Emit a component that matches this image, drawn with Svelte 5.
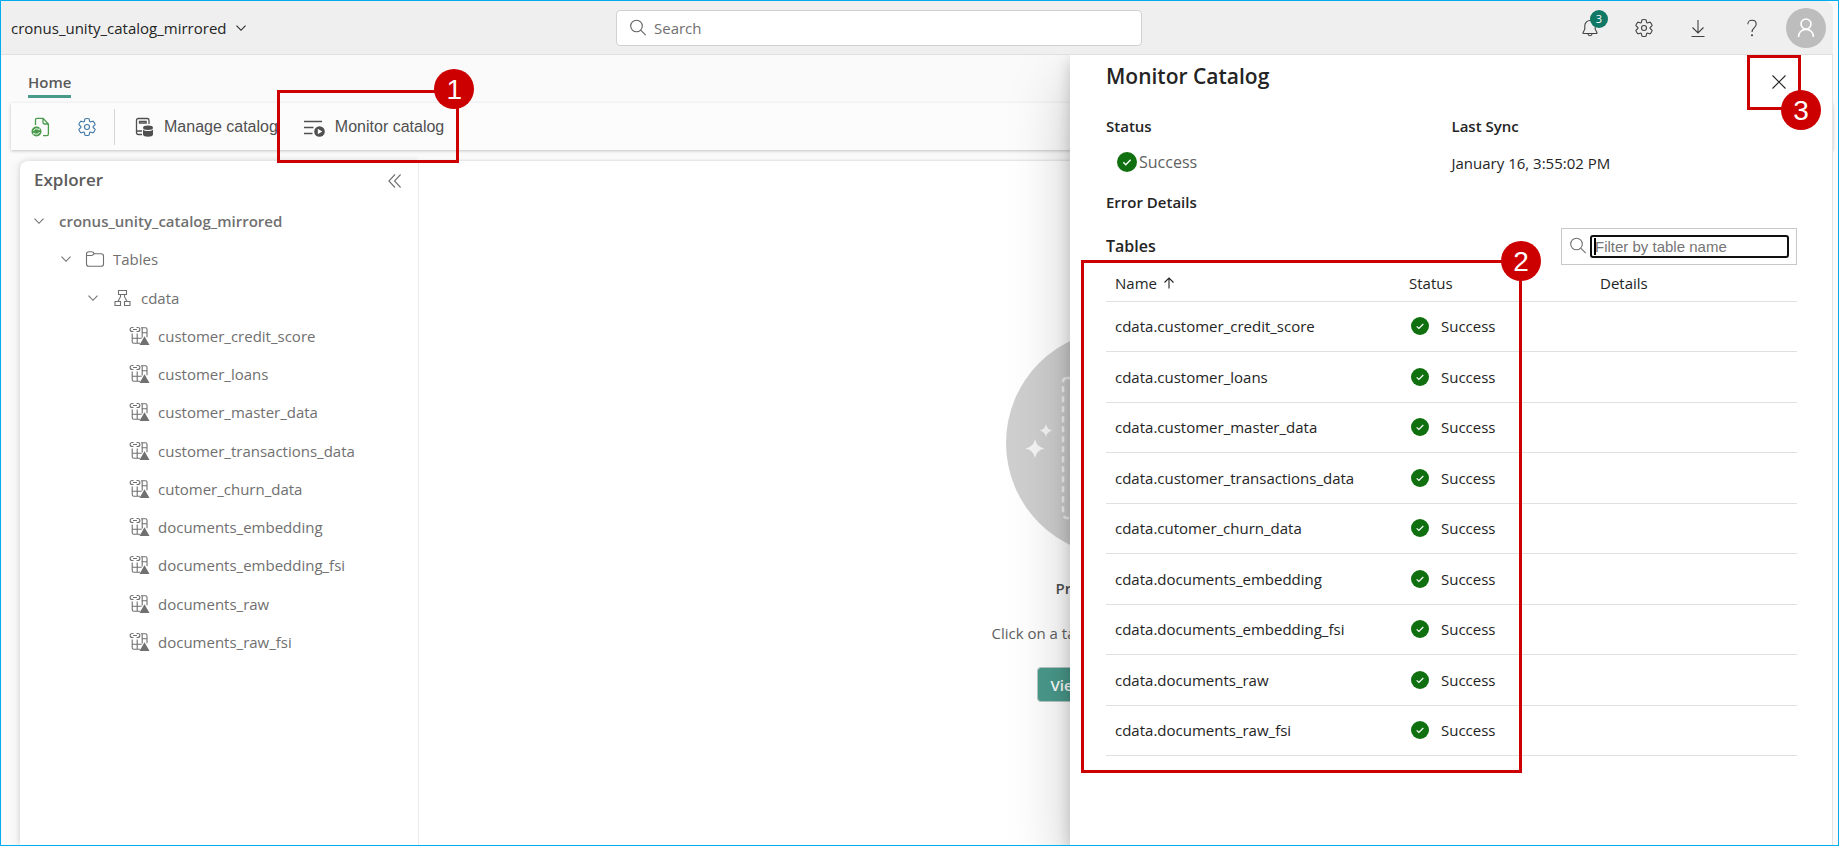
<script>
  const tables = [
    'customer_credit_score',
    'customer_loans',
    'customer_master_data',
    'customer_transactions_data',
    'cutomer_churn_data',
    'documents_embedding',
    'documents_embedding_fsi',
    'documents_raw',
    'documents_raw_fsi'
  ];
  let filter = $state('');
  const rows = $derived(tables.map((t) => 'cdata.' + t).filter((t) => t.includes(filter)));
</script>

{#snippet chevron()}
  <svg class="ico" width="12" height="12" viewBox="0 0 12 12"><path d="M1.500 3.700 6 8.300l4.500-4.600" /></svg>
{/snippet}

{#snippet gear(size)}
  <svg class="ico" width={size} height={size} viewBox="0 0 20 20">
    <path d="M1.910 7.380A8.500 8.500 0 0 1 3.700 4.300a.5.5 0 0 1 .54-.13l1.920.68a1 1 0 0 0 1.320-.76l.36-2a.5.5 0 0 1 .4-.4 8.530 8.530 0 0 1 3.550 0c.2.04.35.2.38.4l.37 2a1 1 0 0 0 1.320.76l1.920-.68a.5.5 0 0 1 .54.13 8.500 8.500 0 0 1 1.780 3.080c.06.2 0 .4-.15.54l-1.560 1.320a1 1 0 0 0 0 1.520l1.560 1.320a.5.5 0 0 1 .15.54 8.500 8.500 0 0 1-1.780 3.080.5.5 0 0 1-.54.13l-1.920-.68a1 1 0 0 0-1.320.76l-.37 2a.5.5 0 0 1-.38.4 8.530 8.530 0 0 1-3.560 0 .5.5 0 0 1-.39-.4l-.36-2a1 1 0 0 0-1.320-.76l-1.920.68a.5.5 0 0 1-.54-.13 8.500 8.500 0 0 1-1.780-3.080.5.5 0 0 1 .15-.54l1.560-1.320a1 1 0 0 0 0-1.520L2.060 7.920a.5.5 0 0 1-.15-.54Z" />
    <circle cx="10" cy="10" r="2.500" />
  </svg>
{/snippet}

{#snippet lens()}
  <svg class="ico" width="18" height="18" viewBox="0 0 18 18"><circle cx="7.500" cy="7" r="5.800" /><path d="m11.700 11.200 5 5" /></svg>
{/snippet}

{#snippet check(size)}
  <svg class="check" width={size} height={size} viewBox="0 0 18 18"><circle cx="9" cy="9" r="9" /><path d="m5.700 9.300 2.200 2.200 4.400-4.500" /></svg>
{/snippet}

<div class="app">
  <header class="topbar">
    <button class="item-name">cronus_unity_catalog_mirrored {@render chevron()}</button>
    <label class="search">
      {@render lens()}
      <input type="search" placeholder="Search" aria-label="Search" />
    </label>
    <nav class="actions" aria-label="Account">
      <button aria-label="Notifications">
        <svg class="ico" width="20" height="20" viewBox="0 0 20 20"><path d="M10 2.500c-3 0-5.200 2.300-5.200 5.200v3.500L3 14.800c-.2.400 0 .7.400.7h13.200c.4 0 .6-.3.4-.7l-1.800-3.600V7.700c0-2.900-2.200-5.200-5.200-5.200ZM7.800 15.700c.2 1.200 1.100 2 2.200 2s2-.8 2.200-2" /></svg>
        <span class="badge">3</span>
      </button>
      <button aria-label="Settings">{@render gear(20)}</button>
      <button aria-label="Downloads">
        <svg class="ico" width="20" height="20" viewBox="0 0 20 20"><path d="M10 2v13M4.500 9.500 10 15l5.500-5.500M3.500 18.500h13" /></svg>
      </button>
      <button aria-label="Help">
        <svg class="ico" width="20" height="20" viewBox="0 0 20 20"><path d="M5.800 6.300c0-2.400 1.800-4 4.200-4s4.200 1.600 4.200 3.900c0 3.300-4.200 3.600-4.200 7.800" /><circle cx="10" cy="17.200" r=".5" /></svg>
      </button>
      <button class="avatar" aria-label="Profile">
        <svg width="20" height="22" viewBox="0 0 20 22"><circle cx="10" cy="7" r="5" /><path d="M2.500 20c0-4.600 3.200-7.600 7.500-7.600s7.500 3 7.500 7.600" /></svg>
      </button>
    </nav>
  </header>

  <div class="body">
    <div class="tabs"><a class="tab" href="#home">Home</a></div>

    <div class="toolbar">
      <button class="square green" aria-label="Refresh">
        <svg width="20" height="20" viewBox="0 0 20 20">
          <path class="ln" d="M4.500 8V3c0-1 .6-1.600 1.600-1.600h6L17.400 7v10c0 1-.6 1.600-1.600 1.600H12M12 1.600V5.600c0 .9.5 1.400 1.400 1.400h4" />
          <circle cx="5.500" cy="14.500" r="5" fill="currentColor" />
          <path d="M2.600 14c.6-2.500 4-3 5.600-.9V11.500M8.400 15c-.6 2.500-4 3-5.600.9v1.600" fill="none" stroke="#fff" />
        </svg>
      </button>
      <button class="square blue" aria-label="Settings">{@render gear(20)}</button>
      <span class="rule"></span>
      <button class="tool">
        <svg width="20" height="20" viewBox="0 0 20 20">
          <path class="ln" d="M8 17.500H4.300c-1.100 0-1.800-.7-1.800-1.800V3.300c0-1.100.7-1.800 1.800-1.800h8.900c1.100 0 1.800.7 1.800 1.800V7M2.500 15.200c0-.8.600-1.200 1.400-1.200H8M5.500 4.500h6.600v1.700H5.500z" />
          <ellipse cx="14" cy="10.800" rx="5" ry="2.200" fill="currentColor" />
          <path d="M9 12.500c1.500 2 8.500 2 10 0v5c0 3-10 3-10 0z" fill="currentColor" />
        </svg>
        Manage catalog
      </button>
      <button class="tool monitor">
        <svg width="22" height="20" viewBox="0 0 22 20">
          <path class="ln" d="M1 4.500h18M1 10.500h9.500M1 16.500h8.500" />
          <circle cx="16.500" cy="14.500" r="5.300" fill="currentColor" />
          <path d="m14.800 11.800 4.500 2.700-4.500 2.700z" fill="#fff" />
        </svg>
        Monitor catalog
        <span class="mark mark-one"><b>1</b></span>
      </button>
    </div>

    <main class="workspace">
      <aside class="explorer">
        <div class="explorer-head">
          <h2>Explorer</h2>
          <button aria-label="Collapse explorer">
            <svg class="ico" width="14" height="16" viewBox="0 0 14 16"><path d="M7 1.500.9 8 7 14.500M12.600 1.500 6.500 8l6.100 6.500" /></svg>
          </button>
        </div>
        <ul class="tree">
          <li class="root">{@render chevron()}<span>cronus_unity_catalog_mirrored</span></li>
          <li class="folder">
            {@render chevron()}
            <svg class="ico dark" width="20" height="18" viewBox="0 0 20 18"><path d="M1.500 14V4c0-1.400.9-2.300 2.300-2.300h3c.5 0 .9.200 1.200.5l1.500 1.500h6.700c1.400 0 2.300.9 2.300 2.300v8c0 1.400-.9 2.300-2.300 2.300H3.800c-1.400 0-2.300-.9-2.300-2.300ZM1.500 5.500h5c.5 0 .9-.1 1.200-.5l1.500-1.300" /></svg>
            <span>Tables</span>
          </li>
          <li class="schema">
            {@render chevron()}
            <svg class="ico" width="17" height="18" viewBox="0 0 17 18"><path d="M4.500 1.500h8v4h-8zM1 12.500h5.500v4H1zM10.500 12.500H16v4h-5.500zM6.500 5.500v2.200L4 12.500M10.500 5.500v2.200l2.500 4.800" /></svg>
            <span>cdata</span>
          </li>
          {#each tables as name}
            <li class="leaf">
              <svg class="ico" width="22" height="20" viewBox="0 0 22 20">
                <path d="M4.500 1.500H3.300C2 1.500 1.100 2.300 1.100 3.500s.9 2 2.200 2h1.200M7.500 1.500h1.200c1.300 0 2.200.8 2.200 2s-.9 2-2.200 2H7.500M4 3.500h4M12 1.700h4.500c1 0 1.500.5 1.500 1.500v8M3.200 7.500v8c0 1.200.5 1.800 1.700 1.800H11M8.200 7.500v9.800M13.200 1.700v9.800M3.200 12.300h9.500M12.500 6.800H18" />
                <path class="solid" d="m15.500 10.300 5 8.700h-10z" />
              </svg>
              <span>{name}</span>
            </li>
          {/each}
        </ul>
      </aside>

      <section class="preview">
        <svg class="art" width="226" height="226" viewBox="0 0 226 226">
          <circle cx="113" cy="113" r="113" fill="#cfcfcf" />
          <rect x="57" y="48" width="112" height="140" rx="4" fill="none" stroke="#f2f2f2" stroke-width="2.500" stroke-dasharray="6 4" />
          <path d="M29 109q1.500 8 9.500 9.500-8 1.500-9.500 9.500-1.500-8-9.500-9.500 8-1.500 9.500-9.500ZM40 94q1 5.500 6.500 6.500-5.500 1-6.500 6.500-1-5.500-6.500-6.500 5.500-1 6.500-6.500Z" fill="#f5f5f5" />
        </svg>
        <div class="intro">
          <h3>Pre</h3>
          <p>Click on a ta</p>
          <button class="primary">Vie</button>
        </div>
      </section>
    </main>

    <section class="drawer" aria-label="Monitor Catalog">
      <div class="drawer-head">
        <h1>Monitor Catalog</h1>
        <button class="close" aria-label="Close">
          <svg class="ico" width="16" height="16" viewBox="0 0 16 16"><path d="m1.500 1.500 13 13M14.500 1.500l-13 13" /></svg>
          <span class="mark mark-three"><b>3</b></span>
        </button>
      </div>
      <dl class="facts">
        <div><dt>Status</dt><dd class="state">{@render check(20)}<span>Success</span></dd></div>
        <div><dt>Last Sync</dt><dd>January 16, 3:55:02 PM</dd></div>
        <div><dt>Error Details</dt></div>
      </dl>
      <div class="list-head">
        <h2>Tables</h2>
        <label class="filter">
          {@render lens()}
          <span class="field">
            <input type="text" placeholder="Filter by table name" aria-label="Filter by table name" bind:value={filter} />
            <i class="caret"></i>
          </span>
        </label>
      </div>
      <div class="grid">
        <table>
          <thead>
            <tr>
              <th class="c-name">
                <span class="cell">Name <svg class="ico" width="12" height="12" viewBox="0 0 12 12"><path d="M6 11.500V1M1.500 5.500 6 1l4.500 4.500" /></svg></span>
              </th>
              <th class="c-status">Status</th>
              <th>Details</th>
            </tr>
          </thead>
          <tbody>
            {#each rows as row}
              <tr><td>{row}</td><td><span class="cell ok">{@render check(18)}Success</span></td><td></td></tr>
            {/each}
          </tbody>
        </table>
        <span class="mark mark-two"><b>2</b></span>
      </div>
    </section>
  </div>
</div>

<style>
  :global(body) { margin: 0; background: #fff; }
  * { box-sizing: border-box; }
  h1, h2, h3, p, dl, dd, ul { margin: 0; padding: 0; }
  button { border: 0; background: none; padding: 0; font: inherit; color: inherit; text-align: left; }
  input { border: 0; outline: 0; background: none; padding: 0; min-width: 0; font: inherit; }

  .app {
    display: flex;
    flex-direction: column;
    height: 100vh;
    padding-right: 5px;
    border: 1px solid #00adef;
    background: #fafafa;
    font: 15px/20px "Open Sans", "Noto Sans", sans-serif;
    color: #242424;
    overflow: hidden;
  }
  .ico { fill: none; stroke: currentColor; stroke-width: 1.1; flex: none; display: block; }
  .ln { fill: none; stroke: currentColor; stroke-width: 1.3; }
  .check { flex: none; display: block; fill: #107010; }
  .check path { fill: none; stroke: #fff; stroke-width: 1.2; }

  .topbar {
    position: relative;
    z-index: 2;
    display: grid;
    grid-template-columns: 605px 526px 1fr;
    align-items: center;
    height: 54px;
    padding: 0 7px 0 10px;
    background: #efefef;
    border-bottom: 1px solid #e0e0e0;
    border-radius: 0 8px 0 0;
    flex: none;
  }
  .item-name { display: flex; align-items: center; gap: 8px; justify-self: start; }
  .search {
    display: flex;
    align-items: center;
    gap: 7px;
    height: 36px;
    padding: 0 12px;
    background: #fff;
    border: 1px solid #d1d1d1;
    border-radius: 4px;
    color: #616161;
  }
  .search input { flex: 1; }
  .search input::placeholder { color: #707070; }
  .actions { display: flex; justify-content: flex-end; align-items: center; gap: 14px; }
  .actions button { position: relative; display: grid; place-items: center; width: 40px; height: 40px; color: #424242; }
  .badge {
    position: absolute;
    left: 20px;
    top: 2px;
    width: 18px;
    border-radius: 9px;
    background: #117865;
    color: #fff;
    font-size: 11px;
    line-height: 18px;
    text-align: center;
  }
  .actions .avatar { border-radius: 50%; background: #bdbdbd; }
  .avatar svg { fill: none; stroke: #fff; stroke-width: 1.6; }

  .body { position: relative; flex: 1; display: flex; flex-direction: column; min-height: 0; padding-left: 10px; }
  .tabs { height: 48px; padding: 15px 17px 0; }
  .tab { display: inline-block; height: 28px; font-weight: 600; font-size: 15px; line-height: 24px; color: #5a5a5a; text-decoration: none; border-bottom: 3px solid #4a9a8b; }
  .toolbar {
    position: relative;
    display: flex;
    align-items: center;
    height: 47px;
    padding-left: 18px;
    background: #fcfcfc;
    box-shadow: 0 1px 3px rgba(0, 0, 0, .22);
    font: 16px/20px "Liberation Sans", Arial, sans-serif;
    color: #505050;
    flex: none;
    z-index: 1;
  }
  .square { display: grid; place-items: center; width: 24px; height: 32px; margin-right: 22px; }
  .green { color: #4a9a4a; }
  .blue { color: #3f78a8; margin-right: 15px; }
  .rule { width: 1px; height: 36px; background: #d4d4d4; margin-right: 19px; }
  .tool { position: relative; display: flex; align-items: center; gap: 10px; margin-right: 25px; }

  .workspace { flex: 1; min-height: 0; display: flex; margin-top: 11px; padding: 0 15px 0 9px; background: #f8f8f8; }
  .explorer {
    width: 399px;
    flex: none;
    background: #fff;
    border-right: 1px solid #ebebeb;
    border-radius: 8px 0 0 0;
    box-shadow: 0 0 6px rgba(0, 0, 0, .18);
    clip-path: inset(-6px 0 0 -8px);
    color: #707070;
  }
  .explorer-head { display: flex; justify-content: space-between; align-items: center; height: 40px; padding: 0 16px 0 14px; }
  .explorer-head h2 { font-size: 17px; line-height: 24px; font-weight: 600; color: #5c5c5c; padding-bottom: 2px; }
  .tree { list-style: none; display: grid; grid-auto-rows: 1fr; height: 460px; padding-top: 1px; }
  .tree li { display: flex; align-items: center; }
  .root { padding-left: 13px; gap: 14px; font-weight: 600; }
  .folder { padding-left: 40px; gap: 8px; }
  .folder .dark { margin-left: 5px; }
  .schema { padding-left: 67px; gap: 10px; }
  .schema .ico + .ico { margin-left: 5px; }
  .leaf { padding-left: 109px; gap: 7px; }
  .solid { fill: currentColor; stroke: none; }

  .preview { flex: 1; display: flex; flex-direction: column; align-items: center; background: #fff; padding-top: 169px; color: #606060; white-space: nowrap; box-shadow: 0 0 3px rgba(0, 0, 0, .2); clip-path: inset(-3px 0 0 0); }
  .intro { display: flex; flex-direction: column; align-items: flex-start; width: 254px; margin-top: 22px; }
  .preview h3 { font-size: 15px; font-weight: 600; line-height: 20px; padding-left: 64px; color: #505050; }
  .preview p { margin-top: 25px; }
  .primary { margin: 24px 0 0 45px; width: 165px; height: 35px; padding: 0 13px; border-radius: 4px; background: #4a9a8b; border: 1px solid #b8c8c4; color: #fff; font-weight: 600; }

  .drawer {
    position: absolute;
    z-index: 1;
    top: 0;
    right: 0;
    bottom: 0;
    width: 763px;
    padding: 0 35px 0 36px;
    background: #fff;
    border-right: 1px solid #e4e4e4;
    box-shadow: 0 26px 58px rgba(0, 0, 0, .22), 0 5px 14px rgba(0, 0, 0, .18);
    clip-path: inset(0 0 0 -80px);
  }
  .drawer-head { display: flex; justify-content: space-between; height: 55px; }
  .drawer-head h1 { font-size: 21px; line-height: 28px; font-weight: 600; margin-top: 7px; }
  .close { position: relative; display: grid; place-items: center; width: 36px; height: 54px; }
  .facts { display: grid; grid-template-columns: 1fr 1fr; }
  .facts > div { line-height: 32px; }
  .facts dt { font-weight: 600; }
  .facts dd { height: 44px; padding-top: 5px; }
  .facts .state { display: flex; align-items: center; gap: 2px; padding: 0 0 4px 11px; color: #616161; font-size: 16px; }
  .list-head { display: flex; justify-content: space-between; align-items: center; height: 38px; margin-top: 9px; }
  .list-head h2 { font-size: 16px; font-weight: 600; }
  .filter { display: flex; align-items: center; gap: 3px; width: 236px; height: 37px; padding: 0 7px; border: 1px solid #c8c8c8; color: #707070; }
  .field { position: relative; flex: 1; display: flex; }
  .field input { width: 100%; height: 23px; border: 2px solid #101010; border-radius: 3px; padding: 0 3px; font: 15px/18px "Liberation Sans", Arial, sans-serif; }
  .field input::placeholder { color: #757575; }
  .caret { position: absolute; left: 4px; top: 3px; width: 2px; height: 17px; background: #000; }

  .grid { position: relative; }
  table { width: 100%; height: 491px; border-collapse: collapse; table-layout: fixed; }
  th { font-weight: 400; text-align: left; height: 36px; }
  th, td { padding: 0 9px; border-bottom: 1px solid #e0e0e0; }
  .c-name { width: 294px; }
  .c-status { width: 191px; }
  .cell { display: flex; align-items: center; gap: 6px; }
  .ok { gap: 12px; padding-left: 2px; }

  .mark { position: absolute; border: 3px solid #cc0000; pointer-events: none; }
  .mark b {
    position: absolute;
    right: -22px;
    top: -22px;
    width: 40px;
    height: 40px;
    border-radius: 50%;
    background: #cc0000;
    color: #fff;
    font: 28px/41px "Liberation Sans", Arial, sans-serif;
    text-align: center;
  }
  .mark-one { inset: -27px -15px -26px -26px; }
  .mark-one b { right: -18px; top: -24px; }
  .mark-two { left: -25px; top: -5px; width: 441px; height: 513px; }
  .mark-three { left: -14px; top: 0; width: 54px; height: 55px; }
  .mark-three b { right: -23px; top: auto; bottom: -23px; }
</style>
